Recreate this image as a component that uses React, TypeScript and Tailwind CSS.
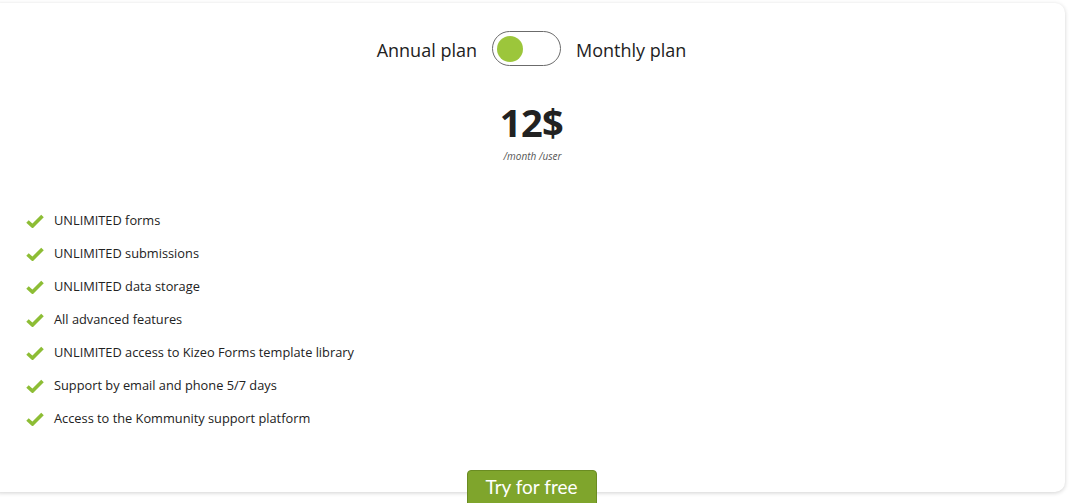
import { useState } from 'react';

const FEATURES = [
  'UNLIMITED forms',
  'UNLIMITED submissions',
  'UNLIMITED data storage',
  'All advanced features',
  'UNLIMITED access to Kizeo Forms template library',
  'Support by email and phone 5/7 days',
  'Access to the Kommunity support platform',
];

const Check = () => (
  <svg width="18" height="14" viewBox="0 0 18 14" className="shrink-0">
    <path d="M1.5 7.5 L6.5 12 L16.5 2" fill="none" stroke="#8dbd35" strokeWidth="3.6" strokeLinejoin="miter" />
  </svg>
);

export default function App() {
  const [monthly, setMonthly] = useState(false);

  return (
    <div className="h-[503px] overflow-hidden bg-white pt-[3px] pr-[5px]" style={{ fontFamily: '"Open Sans", sans-serif' }}>
      <div className="ml-[-10px] h-[489px] rounded-[10px] bg-white shadow-[0_1px_4px_rgba(0,0,0,0.18)] flex flex-col">
        <div className="flex items-center justify-center gap-[15px] pt-[28px] pl-[8px]">
          <span className="text-[18px] text-[#222] pt-[3px]">Annual plan</span>
          <button
            onClick={() => setMonthly(!monthly)}
            className={`w-[69px] h-[35px] rounded-full border border-[#6b6b6b] bg-white flex items-center px-[4px] ${monthly ? 'justify-end' : 'justify-start'}`}
          >
            <span className="block w-[26px] h-[26px] rounded-full bg-[#9cc63b]" />
          </button>
          <span className="text-[18px] text-[#222] pt-[3px]">Monthly plan</span>
        </div>

        <div className="flex flex-col items-center pl-[8px] mt-[37px]">
          <div className="text-[38px] font-bold leading-none text-[#222] tracking-[-0.5px]">12$</div>
          <div className="text-[10px] italic text-[#555] mt-[8px] ml-[2px]">/month /user</div>
        </div>

        <ul className="mt-[47px] pl-[36px] flex flex-col gap-[14px]">
          {FEATURES.map((f) => (
            <li key={f} className="flex items-center gap-[10px] h-[19px] text-[12.8px] text-[#222]">
              <Check />
              <span>{f}</span>
            </li>
          ))}
        </ul>

        <div className="mt-auto flex justify-center pl-[8px] mb-[-33px]">
          <button
            className="w-[130px] h-[55px] rounded-[4px] bg-[#7fa52c] border border-[#6a8c22] text-white text-[19px] pb-[20px]"
            style={{ fontFamily: 'Lato, sans-serif' }}
          >
            Try for free
          </button>
        </div>
      </div>
    </div>
  );
}
